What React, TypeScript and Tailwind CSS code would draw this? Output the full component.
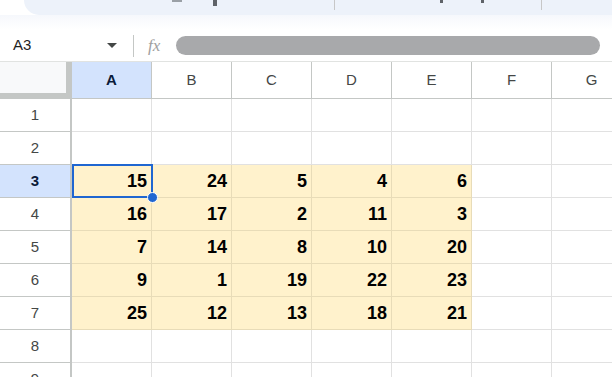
const columns = ['A', 'B', 'C', 'D', 'E', 'F', 'G']

const data: (number | null)[][] = [
  [null, null, null, null, null],
  [null, null, null, null, null],
  [15, 24, 5, 4, 6],
  [16, 17, 2, 11, 3],
  [7, 14, 8, 10, 20],
  [9, 1, 19, 22, 23],
  [25, 12, 13, 18, 21],
  [null, null, null, null, null],
  [null, null, null, null, null],
]

function Toolbar() {
  return (
    <div className="h-[30px] bg-white">
      <div className="h-[15px] ml-[24px] bg-[#edf2fa] rounded-bl-[18px] flex items-start">
        <div className="ml-[148px] w-[10px] h-[2px] bg-[#9aa0a6]" />
        <div className="ml-[31px] w-[4px] h-[6px] bg-[#5f6368]" />
        <div className="ml-[117px] w-px h-[10px] bg-[#c7c7c7]" />
        <div className="ml-[105px] w-[3px] h-[3px] bg-[#5f6368]" />
        <div className="ml-[38px] w-[3px] h-[3px] bg-[#5f6368]" />
        <div className="ml-[57px] w-px h-[10px] bg-[#c7c7c7]" />
      </div>
      <div className="h-[15px] bg-gradient-to-b from-[#f6f8fc] to-white" />
    </div>
  )
}

function FormulaBar() {
  return (
    <div className="h-[32px] flex items-center border-b border-[#e1e3e1] bg-white">
      <div className="w-[105px] pl-[13px] text-[15px] text-[#1f1f1f]">A3</div>
      <div className="w-[14px] flex justify-center">
        <svg width="10" height="5" viewBox="0 0 10 5">
          <path d="M0 0 L10 0 L5 5 Z" fill="#444746" />
        </svg>
      </div>
      <div className="ml-[14px] w-px h-[22px] bg-[#c4c7c5]" />
      <div className="ml-[14px] w-[16px] text-[17px] italic text-[#a0a0a0] font-['Liberation_Serif',serif] leading-none">
        fx
      </div>
      <div className="ml-[12px] w-[424px] h-[19px] rounded-full bg-[#a8a9ab]" />
    </div>
  )
}

function HeaderRow() {
  return (
    <div className="flex h-[37px]">
      <div className="shrink-0 w-[72px] h-[37px] bg-[#f8f9fa] border-r-[6px] border-b-[6px] border-[#c4c7c5]" />
      {columns.map((c) => (
        <div
          key={c}
          className={`shrink-0 w-[80px] flex items-center justify-center border-r border-b border-[#c4c7c5] text-[15px] ${
            c === 'A' ? 'bg-[#d3e3fd] font-bold text-[#0b1b3a]' : 'bg-white text-[#444746]'
          }`}
        >
          {c}
        </div>
      ))}
    </div>
  )
}

function DataRow({ index, values }: { index: number; values: (number | null)[] }) {
  const selected = index === 3
  return (
    <div className="flex h-[33px]">
      <div
        className={`shrink-0 w-[72px] flex items-center justify-center border-r-2 border-b border-[#c4c7c5] text-[15px] ${
          selected ? 'bg-[#d3e3fd] font-bold text-[#0b1b3a]' : 'bg-white text-[#444746]'
        }`}
      >
        {index}
      </div>
      {columns.map((c, i) => {
        const v = i < values.length ? values[i] : null
        const filled = v !== null
        return (
          <div
            key={c}
            className={`shrink-0 w-[80px] flex items-center justify-end pr-[4px] border-r border-b text-[18px] font-bold text-black ${
              filled ? 'bg-[#fff2cc] border-[#e8dcb8]' : 'bg-white border-[#e1e1e1]'
            }`}
          >
            {v}
          </div>
        )
      })}
    </div>
  )
}

export default function App() {
  return (
    <div className="w-[612px] h-[377px] overflow-hidden bg-white font-['Liberation_Sans',Arial,sans-serif]">
      <Toolbar />
      <FormulaBar />
      <div className="relative">
        <HeaderRow />
        {data.map((row, i) => (
          <DataRow key={i} index={i + 1} values={row} />
        ))}
        {/* selection box on A3 */}
        <div className="absolute left-[72px] top-[102px] w-[81px] h-[34px] border-2 border-[#1f66d1] pointer-events-none" />
        <div className="absolute left-[147px] top-[130px] w-[11px] h-[11px] rounded-full bg-[#1f66d1] border border-white" />
      </div>
    </div>
  )
}
